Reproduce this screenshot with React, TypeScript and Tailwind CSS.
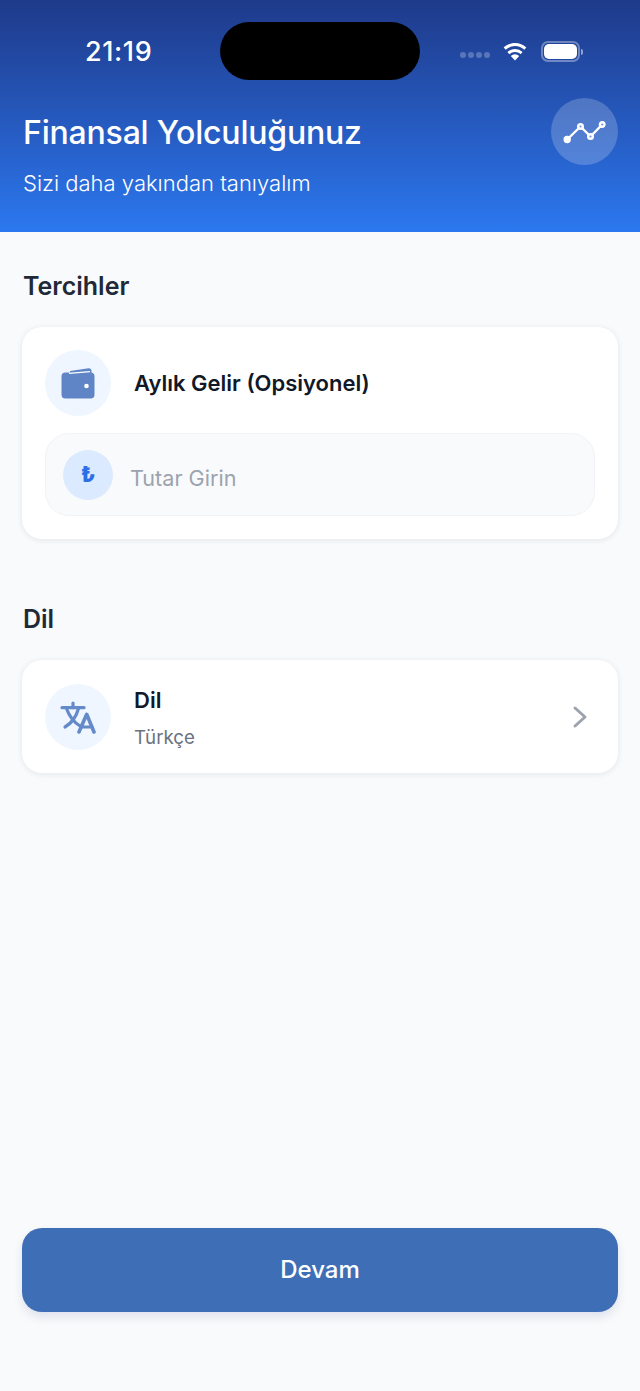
import React from "react";

function Wifi() {
  return (
    <svg width="28" height="21" viewBox="0 0 28 21" fill="none">
      <path d="M14 2c-4.400 0-8.400 1.700-11.300 4.600l2 2.200A13.400 13.400 0 0 1 14 5c3.600 0 6.900 1.400 9.300 3.800l2-2.200A16 16 0 0 0 14 2Z" fill="#fff" />
      <path d="M14 8c-2.900 0-5.600 1.100-7.600 3l2 2.200A8.300 8.300 0 0 1 14 11c2.200 0 4.200.8 5.600 2.200l2-2.200A11 11 0 0 0 14 8Z" fill="#fff" />
      <path d="M9.800 15 14 19.500l4.200-4.500a6.200 6.200 0 0 0-8.400 0Z" fill="#fff" />
    </svg>
  );
}

function Chart() {
  return (
    <svg width="44" height="28" viewBox="0 0 44 28" fill="none" stroke="#fff" strokeWidth="2.400" strokeLinecap="round" strokeLinejoin="round">
      <path d="M4.200 21.500 17.500 8.500 27.500 18.500 39.200 6.500" />
      <circle cx="4.200" cy="21.500" r="2.500" fill="#fff" />
      <circle cx="17.500" cy="8.500" r="2.300" fill="#6f96de" />
      <circle cx="27.500" cy="18.500" r="2.300" fill="#6f96de" />
      <circle cx="39.200" cy="6.500" r="2.300" fill="#6f96de" />
    </svg>
  );
}

function WalletIcon() {
  return (
    <svg width="34" height="31" viewBox="0 0 34 31" fill="none">
      <path d="M9 3 27.500 .3C29 .1 30.500 1.200 30.500 3v3H9Z" fill="#5f85c6" />
      <rect x="0.500" y="4.500" width="33" height="26" rx="4" fill="#5f85c6" />
      <path d="M8 5.400 29 3.600" stroke="#fff" strokeWidth="1.300" />
      <circle cx="25.500" cy="18" r="2.300" fill="#fff" />
    </svg>
  );
}

function LanguageIcon() {
  return (
    <svg width="36" height="34" viewBox="0 0 36 34" fill="none" stroke="#648ac9" strokeWidth="3.200" strokeLinecap="round" strokeLinejoin="round">
      <path d="M2 7.700h22" />
      <path d="M13 3v4.700" />
      <path d="M6.700 9c2.500 7 7 13 13.300 17" />
      <path d="M18.300 9c-2 7.500-6.500 14-13.300 18" />
      <path d="M19 32l7.700-17.700L34 32" strokeWidth="3.600" />
      <path d="M21.500 27h10.500" />
    </svg>
  );
}

function SectionTitle({ children }: { children: React.ReactNode }) {
  return <h2 className="text-[25px] leading-[30px] font-semibold text-[#1f2937]">{children}</h2>;
}

export default function App() {
  return (
    <div className="flex h-[1391px] w-[640px] flex-col overflow-hidden bg-[#f9fafb] font-['Inter',sans-serif]">
      <header className="relative h-[232px] shrink-0 bg-gradient-to-b from-[#1e3a8a] to-[#2b78f0] px-[23px] text-white">
        <div className="flex h-[98px] items-start justify-between">
          <span className="mt-[36px] ml-[62px] text-[27px] leading-[32px] font-medium tracking-[0.6px]">21:19</span>
          <div className="mt-[41px] mr-[34px] flex items-center">
            <div className="mt-[6px] mr-[11px] flex gap-[2px]">
              <span className="h-[6px] w-[6px] rounded-full bg-white/25" />
              <span className="h-[6px] w-[6px] rounded-full bg-white/25" />
              <span className="h-[6px] w-[6px] rounded-full bg-white/25" />
              <span className="h-[6px] w-[6px] rounded-full bg-white/25" />
            </div>
            <Wifi />
            <div className="ml-[12px] flex items-center">
              <div className="flex h-[21px] w-[39px] rounded-[7px] border-2 border-white/35 p-[1px]">
                <div className="flex-1 rounded-[5px] bg-white" />
              </div>
              <div className="ml-[1px] h-[6px] w-[2px] rounded-r-full bg-white/50" />
            </div>
          </div>
        </div>
        <div className="absolute top-[22px] left-[220px] h-[58px] w-[200px] rounded-[29px] bg-black" />
        <div className="flex items-start justify-between">
          <div>
            <h1 className="mt-[15px] text-[32px] leading-[40px] font-medium tracking-[-0.2px]">Finansal Yolculuğunuz</h1>
            <p className="mt-[15px] text-[22px] leading-[30px] font-light text-white">Sizi daha yakından tanıyalım</p>
          </div>
          <div className="mr-[-1px] flex h-[67px] w-[67px] items-center justify-center rounded-full bg-white/20">
            <Chart />
          </div>
        </div>
      </header>

      <main className="flex flex-1 flex-col px-[22px]">
        <div className="mt-[39px] pl-[1px]">
          <SectionTitle>Tercihler</SectionTitle>
        </div>
        <section className="mt-[26px] h-[212px] rounded-[20px] bg-white px-[23px] pt-[23px] shadow-[0_1px_6px_rgba(15,23,42,0.09)]">
          <div className="flex items-center gap-[23px]">
            <div className="flex h-[66px] w-[66px] items-center justify-center rounded-full bg-[#eff6ff]">
              <WalletIcon />
            </div>
            <span className="text-[22px] leading-[28px] font-semibold text-[#111827]">Aylık Gelir (Opsiyonel)</span>
          </div>
          <div className="mt-[17px] flex h-[83px] items-center gap-[17px] rounded-[24px] border border-[#f1f3f6] bg-[#f9fafb] pl-[17px]">
            <div className="flex h-[50px] w-[50px] items-center justify-center rounded-full bg-[#dbeafe] text-[22px] font-extrabold text-[#2b6fe6]">₺</div>
            <span className="relative top-[3px] text-[21.600px] leading-[28px] text-[#9ca3af]">Tutar Girin</span>
          </div>
        </section>

        <div className="mt-[65px] pl-[1px]">
          <SectionTitle>Dil</SectionTitle>
        </div>
        <section className="mt-[26px] flex h-[113px] items-center gap-[23px] rounded-[20px] bg-white px-[23px] shadow-[0_1px_6px_rgba(15,23,42,0.09)]">
          <div className="flex h-[66px] w-[66px] items-center justify-center rounded-full bg-[#eff6ff]">
            <LanguageIcon />
          </div>
          <div className="flex-1 pt-[3px]">
            <div className="text-[22px] leading-[28px] font-semibold text-[#111827]">Dil</div>
            <div className="mt-[12px] text-[18.700px] leading-[24px] text-[#6b7280]">Türkçe</div>
          </div>
          <svg width="16" height="24" viewBox="0 0 16 24" fill="none" stroke="#9ca3af" strokeWidth="3" strokeLinecap="round" strokeLinejoin="round" className="mr-[7px]">
            <path d="M3 3l10 9-10 9" />
          </svg>
        </section>

        <button className="mt-auto mb-[79px] flex h-[84px] items-center justify-center rounded-[20px] bg-[#3e6fb6] text-[24px] font-medium text-white shadow-[0_5px_10px_rgba(30,58,138,0.12)]">
          Devam
        </button>
      </main>
    </div>
  );
}
